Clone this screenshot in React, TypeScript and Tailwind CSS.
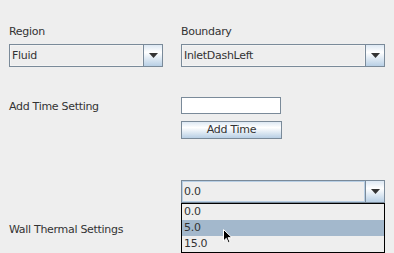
import React from 'react';

const grad = 'bg-[linear-gradient(to_bottom,#dde8f3_0%,#ffffff_35%,#b8cfe5_100%)]';

function Arrow() {
  return (
    <svg width="9" height="5" viewBox="0 0 9 5">
      <polygon points="0,0 9,0 4.5,5" fill="#333333" />
    </svg>
  );
}

function Combo({ value, width, focused }: { value: string; width: string; focused?: boolean }) {
  return (
    <div className={`flex h-[23px] border border-[#7a8a99] bg-[#eeeeee] ${width}`}>
      <div
        className={`flex-1 pl-[2px] leading-[21px] ${focused ? 'shadow-[inset_0_0_0_1px_#b8cfe5]' : 'shadow-[inset_0_0_0_1px_#f4f4f4]'}`}
      >
        {value}
      </div>
      <div className={`w-[19px] border-l border-[#7a8a99] flex items-center justify-center ${grad}`}>
        <Arrow />
      </div>
    </div>
  );
}

export default function App() {
  return (
    <div
      className="relative w-[394px] h-[253px] overflow-hidden bg-[#eeeeee] text-[#333333] text-[11px] tracking-[-0.3px] pl-[9px] pt-[24px]"
      style={{ fontFamily: '"DejaVu Sans", sans-serif' }}
    >
      <div className="flex">
        <div className="w-[172px]">
          <div className="leading-[15px]">Region</div>
          <div className="mt-[5px]">
            <Combo value="Fluid" width="w-[154px]" />
          </div>
        </div>
        <div>
          <div className="leading-[15px]">Boundary</div>
          <div className="mt-[5px]">
            <Combo value="InletDashLeft" width="w-[204px]" />
          </div>
        </div>
      </div>

      <div className="flex mt-[30px]">
        <div className="w-[172px] pt-[2px] leading-[15px]">Add Time Setting</div>
        <div>
          <div className="w-[100px] h-[17px] bg-white border border-[#7a8a99] shadow-[inset_-1px_-1px_0_#ffffff]" />
          <div className={`mt-[7px] w-[101px] h-[18px] border border-[#7a8a99] text-center leading-[16px] ${grad}`}>
            Add Time
          </div>
        </div>
      </div>

      <div className="flex items-start mt-[41px]">
        <div className="w-[172px] pt-[42px] leading-[15px]">Wall Thermal Settings</div>
        <div className="relative">
          <Combo value="0.0" width="w-[204px]" focused />
          <div className="absolute left-0 top-full w-[204px] border border-black bg-[#eeeeee]">
            <div className="h-[16px] leading-[16px] pl-[2px]">0.0</div>
            <div className="h-[16px] leading-[16px] pl-[2px] bg-[#a3b8cc]">5.0</div>
            <div className="h-[16px] leading-[16px] pl-[2px]">15.0</div>
          </div>
          <svg
            className="absolute left-[42px] top-[49px]"
            width="11"
            height="15"
            viewBox="0 0 11 15"
          >
            <path d="M0.5 0.5 L0.5 12 L3.3 9.3 L5.3 13.8 L7 13 L5 8.7 L9 8.7 Z" fill="#000000" stroke="#ffffff" strokeWidth="1" />
          </svg>
        </div>
      </div>
    </div>
  );
}
